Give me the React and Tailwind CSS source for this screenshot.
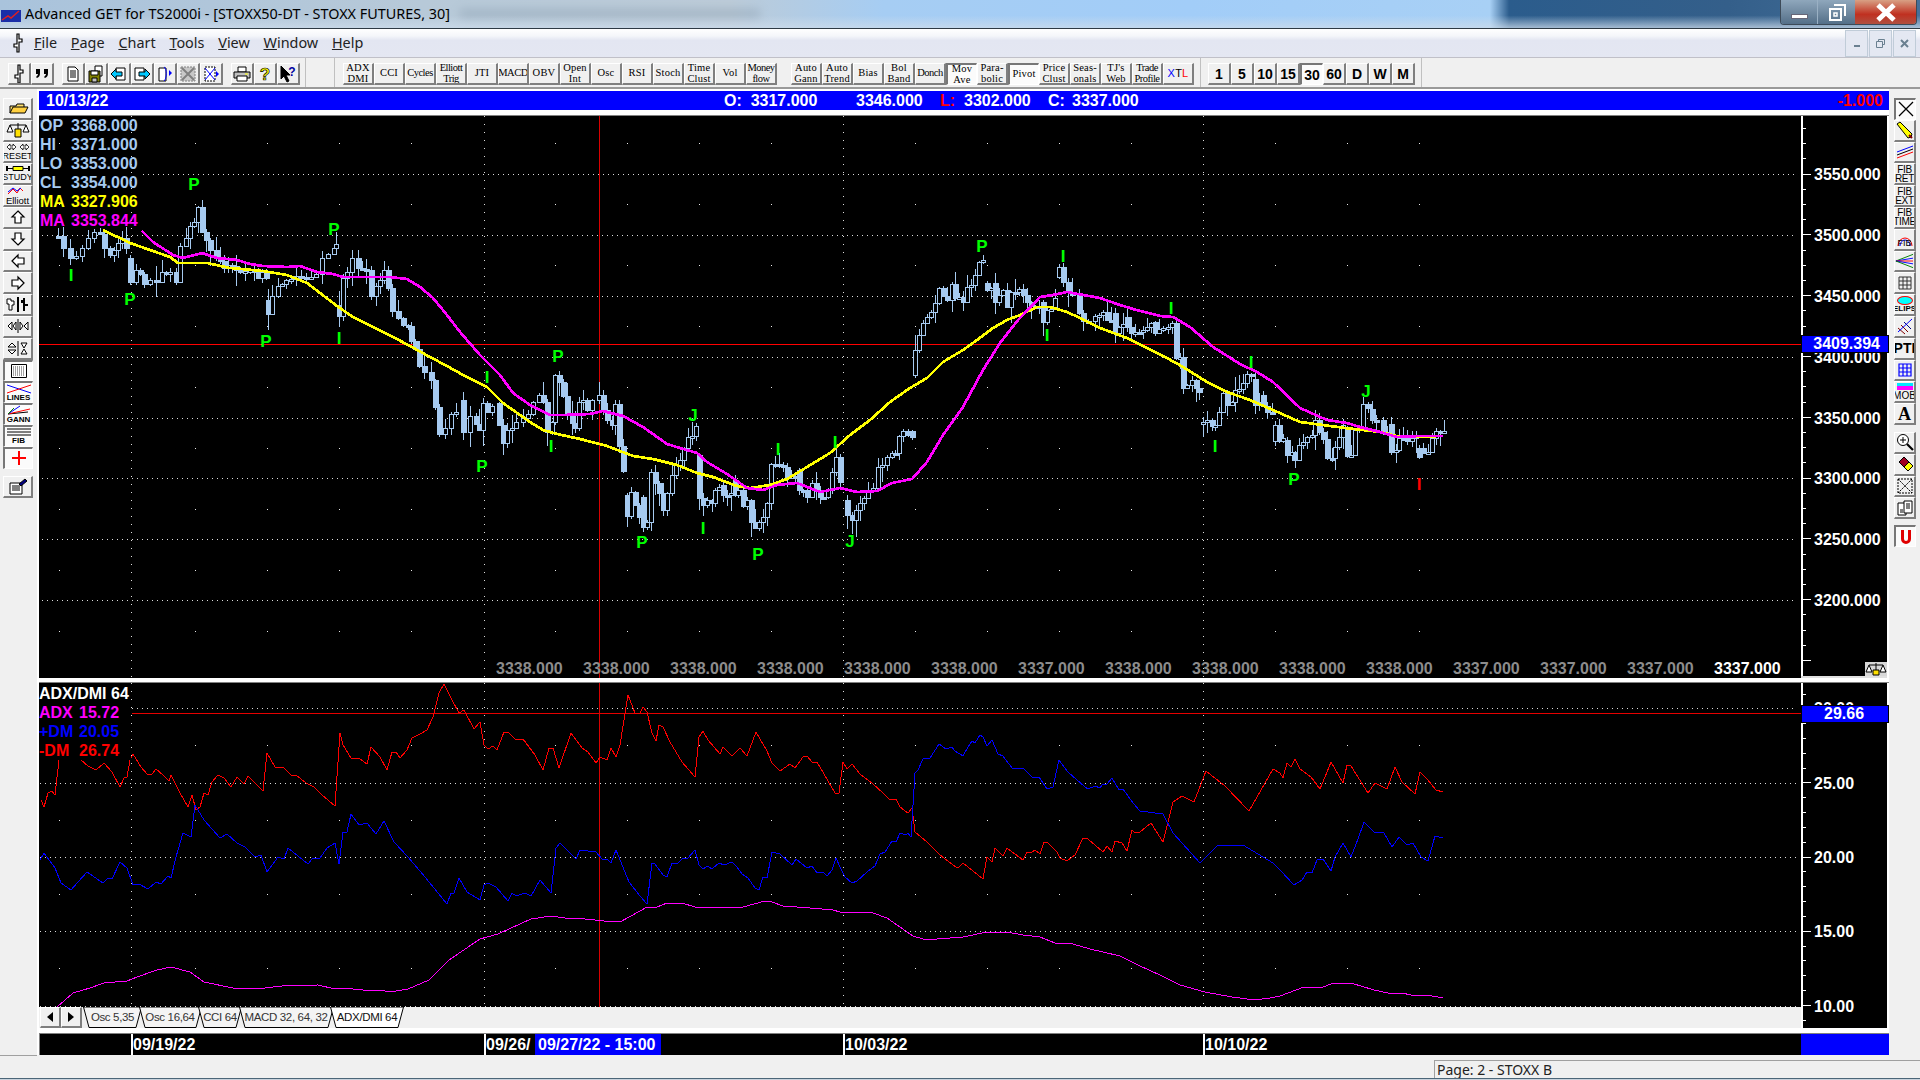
import React from "react";

// close prices as screen positions [x, y, optional open]
const closes = [
  [58,236],[63,248],[70,258],[76,256],[82,248],[88,238],[94,232],[100,234],[104,248],[110,255],[114,250],[118,243],[122,238],[126,248],[130,282,258],[136,270],[144,284],[150,280],[156,282],[162,272],[170,272],[176,282],[180,246],[186,238],[190,226],[194,222],[198,207],[202,232],[206,240],[210,250],[216,258],[224,268],[232,266],[240,272],[250,270],[258,278],[262,272],[266,278],[268,314,300],[272,296],[278,286],[286,280],[296,276],[306,278],[316,274],[322,258],[328,254],[334,248],[336,244],[339,316,305],[343,278],[347,272],[352,258],[358,268],[366,270],[371,296,270],[376,286],[380,280],[384,270],[388,288],[392,311],[398,318],[403,325],[408,326],[411,341],[415,349],[419,366],[424,372],[431,380],[435,407],[439,434],[445,428],[451,414],[456,412],[463,432,400],[470,416],[476,424],[479,430],[483,403],[487,412],[492,406],[499,425,403],[503,443],[507,430],[512,428],[516,422],[523,418],[528,414],
  [533,402],[539,395],[543,402],[547,432],[552,422],[555,375],[559,382],[563,396],[567,413],[572,423],[575,428],[579,402],[583,400],[587,410],[592,400],[599,395],[603,410],[607,420],[612,425],[615,404],[619,446,404],[623,471],[627,516,495],[631,492],[635,505],[643,527,497],[647,522],[651,472],[655,483],[659,493],[663,510],[667,493],[672,475],[676,465],[680,460],[684,448],[688,437],[692,436],[696,426],[699,498,455],[703,505],[707,500],[712,503],[715,490],[719,487],[723,495,485],[727,495],[735,495,480],[738,490],[743,506,490],[747,500],[751,522,500],[755,528],[759,522],[763,517],[767,503],[771,464],[775,464],[779,465],[783,467],[787,478],[795,477],[799,490,470],[803,490],[807,497],[812,483],[816,491],[820,497],[823,497],[828,490],[832,472],[836,457],[840,482],[847,515,500],[852,520],[856,510],[860,503],[864,498],[868,491],[873,488],[878,467],[882,465],[887,457],[892,453],[895,453],[899,436],[903,431],[912,437,431],
  [915,350,375],[919,335],[923,323],[927,317],[931,312],[935,303],[939,288],[943,296,288],[947,300],[952,284],[955,298,284],[959,297],[963,302],[967,287],[971,285],[975,275],[979,262],[983,260],[987,290,283],[991,288],[995,302,283],[999,295],[1003,290],[1007,307,290],[1011,292],[1015,292],[1019,289],[1023,295],[1027,302],[1035,308],[1039,306],[1043,322,302],[1047,310],[1051,309],[1055,298],[1059,267,277],[1063,282,267],[1068,292],[1072,295],[1079,313,294],[1083,321],[1088,321],[1095,316],[1099,315],[1103,312],[1107,320,312],[1111,320],[1115,333,313],[1119,327],[1127,327,317],[1131,333],[1135,332],[1143,330],[1147,327],[1151,323],[1155,333,322],[1159,329],[1163,328],[1168,327],[1172,323],[1176,358,323],[1180,357],[1183,388,357],[1187,385],[1192,380],[1196,388],[1199,392],[1203,422,424],[1207,420],[1212,426,420],[1215,425],[1219,412],[1223,393],[1227,405,393],[1232,402],[1235,390],[1239,389],[1243,383],[1247,374],[1251,374],[1255,405,379],[1259,402],[1263,406,395],[1267,412],[1272,413],[1275,425,441],[1279,441,425],[1283,438],[1287,455,440],[1292,452],[1295,460,452],[1299,445],[1303,442],[1307,437],[1312,435],[1315,420],[1319,432,420],[1323,439],[1327,458],[1332,458],[1335,447],[1339,437],[1343,425],[1347,456,430],[1351,455],[1355,430],[1359,428],[1363,404],[1368,408],[1372,420,409],[1376,420],[1383,432,420],[1387,432],[1391,452,424],[1396,450],[1399,438],[1403,438],[1407,441],[1412,438],[1416,435],[1419,457,448],[1423,453,448],[1428,452],[1432,438],[1436,431],[1440,431],[1444,431,432],
];

function buildCandles() {
  let seed = 7;
  const rnd = () => {
    seed = (seed * 16807) % 2147483647;
    return seed / 2147483647;
  };
  const list = [];
  let prev = closes[0][1];
  closes.forEach(([x, y, open], i) => {
    const last = closes[i - 1];
    if (last && x - last[0] >= 7) {
      const steps = Math.floor((x - last[0]) / 4);
      for (let s = 1; s < steps; s++) {
        const t = s / steps;
        const c = last[1] + (y - last[1]) * t + (rnd() - 0.5) * 6;
        list.push({ x: Math.round(last[0] + (x - last[0]) * t), o: prev, c });
        prev = c;
      }
    }
    list.push({ x, o: open ?? prev, c: y });
    prev = y;
  });
  return list.map((k) => {
    const top = Math.min(k.o, k.c);
    const bottom = Math.max(k.o, k.c);
    return {
      ...k,
      top,
      bottom: Math.max(bottom, top + 2),
      hi: top - 1 - rnd() * rnd() * 16,
      lo: bottom + 1 + rnd() * rnd() * 18,
      down: k.c >= k.o,
    };
  });
}
const candles = buildCandles();

const maYellow = "103,230 130,243 150,250 170,257 178,263 207,263 230,268 263,271 287,275 307,283 320,293 337,306 353,317 373,327 393,337 410,346 430,357 447,366 463,375 487,387 503,403 523,417 530,422 543,430 557,434 580,439 607,446 633,456 653,459 677,465 697,473 713,477 737,486 750,488 770,485 787,479 807,467 830,453 850,435 870,420 890,402 910,388 927,378 943,362 963,350 977,340 993,328 1007,320 1020,315 1037,307 1050,307 1067,312 1080,318 1100,328 1127,338 1147,348 1167,358 1183,367 1207,382 1227,392 1250,400 1273,410 1300,422 1315,424 1345,428 1380,432 1400,437 1443,436";
const maMagenta = "142,231 153,242 173,255 183,258 202,253 217,258 237,260 250,264 263,266 287,267 300,266 317,272 333,274 343,277 390,277 407,279 420,287 433,298 447,315 460,332 480,355 500,375 513,393 530,405 550,415 563,415 590,414 603,411 623,416 643,427 667,444 680,448 697,453 707,462 727,474 747,488 763,490 777,485 797,483 820,492 840,488 857,492 877,491 892,483 912,479 927,462 943,435 963,407 983,370 1000,343 1018,320 1023,315 1040,297 1053,295 1067,292 1100,298 1117,304 1133,309 1160,316 1173,317 1190,327 1213,347 1240,364 1257,372 1273,382 1300,408 1327,420 1347,423 1360,427 1380,432 1397,437 1420,436 1443,436";

const dmiRed = [
  "41,800 44,807 48,793 52,791 55,795 59,760",
  "81,760 88,766 96,770 104,763 112,772 120,787 124,778 127,777 130,760 133,754 141,767 147,774 152,774 156,769 163,775 169,781 171,775 180,793 188,807 192,795 196,810 200,807 204,793 208,795 212,782 218,775 224,778 231,787 237,777 244,784 248,776 255,783 263,791 267,753 275,767 284,768 292,776 296,775 306,783 314,787 322,795 335,806 340,733 343,745 351,758 359,758 367,764 371,747 380,757 387,770 392,752 396,752 400,758 407,750 412,738 420,734 427,730 433,717 439,693 444,684 451,698 459,713 464,710 474,729 480,722 484,745 488,749 493,746 497,750 504,732 508,732 516,740 523,739 535,755 543,770 549,748 553,748 559,768 571,733 582,748 588,752 596,763 600,757 607,760 611,748 616,757 620,745 628,695 635,713 640,713 643,707 647,712 652,733 656,741 659,725 663,727 670,742 682,762 695,777 699,737 703,731 708,740 720,754 723,747 732,756 740,748 747,756 756,732 767,751 772,763 780,771 790,764 795,768 803,757 807,756 812,762 817,762 835,793 839,793 843,762 847,769 852,764 860,774 873,784 883,793 890,800 896,799 900,807 908,813 912,808 915,832 927,842 940,855 956,867 959,867 963,863 983,879 987,857 992,862 995,848 1003,856 1007,848 1023,860 1027,852 1031,853 1035,850 1040,854 1044,842 1048,843 1057,852 1060,858 1067,861 1075,855 1083,838 1088,839 1103,852 1107,846 1112,852 1115,841 1122,843 1127,851 1132,830 1135,833 1140,832 1151,823 1163,842 1173,802 1182,796 1194,802 1206,771 1225,786 1249,811 1273,769 1280,773 1283,778 1287,763 1291,767 1295,759 1300,769 1311,777 1320,789 1325,777 1331,762 1343,783 1347,765 1351,766 1368,793 1375,783 1387,789 1395,767 1402,782 1415,794 1420,772 1427,779 1436,790 1443,792",
];
const dmiBlue = "40,860 44,853 55,868 61,883 71,890 78,882 87,872 103,883 108,878 112,879 120,862 127,868 133,885 139,884 148,889 156,882 161,884 168,876 171,878 176,857 183,833 191,837 195,805 204,820 220,838 227,834 237,843 245,847 255,857 261,855 267,872 278,857 284,859 288,848 308,864 312,859 320,858 327,848 335,843 339,864 343,832 347,832 351,814 359,825 367,823 376,834 384,821 394,842 408,857 425,877 447,904 451,893 454,893 459,878 467,892 480,900 484,885 488,883 496,887 508,901 512,893 516,896 525,893 531,896 540,880 551,893 556,848 560,843 576,859 580,850 596,852 602,859 608,860 611,863 616,850 629,882 640,896 647,904 652,863 655,864 663,875 667,877 672,863 677,864 683,858 688,858 695,850 699,865 703,869 708,866 712,869 719,863 724,865 732,862 737,867 742,874 748,878 755,888 759,890 763,877 767,878 772,852 780,854 792,865 796,859 807,868 812,866 817,873 823,872 827,876 832,870 836,858 840,867 845,877 852,883 857,881 867,872 875,866 880,854 885,852 892,841 896,842 900,833 906,835 908,833 911,837 915,773 918,770 923,759 930,758 939,744 946,749 952,747 955,751 963,756 968,747 972,741 975,743 980,735 983,737 987,746 992,740 998,754 1003,756 1012,768 1018,769 1023,768 1032,777 1039,777 1047,789 1053,787 1059,760 1068,772 1085,787 1088,789 1095,786 1100,788 1103,784 1107,784 1112,778 1119,790 1123,789 1133,803 1140,811 1163,814 1173,833 1200,863 1218,845 1243,845 1273,863 1280,870 1294,885 1302,880 1307,872 1312,873 1317,860 1323,859 1331,871 1335,857 1343,843 1351,857 1358,839 1364,822 1374,832 1384,833 1392,847 1399,837 1407,845 1413,843 1421,857 1428,861 1435,836 1443,838";
const adx = "40,1007 57,1007 73,993 90,988 104,983 127,981 137,977 157,970 171,967 190,972 204,982 233,988 245,989 265,988 282,986 318,985 335,989 343,988 363,990 380,990 390,992 408,989 429,980 449,960 480,939 498,934 531,919 551,916 565,918 576,918 604,921 620,922 640,911 647,907 657,907 667,903 682,903 695,907 702,907 743,907 765,901 772,902 783,906 810,908 833,910 840,912 873,913 887,918 900,927 913,936 923,939 937,939 963,937 987,932 1007,932 1023,935 1040,937 1055,943 1073,944 1090,949 1120,956 1140,966 1160,975 1180,985 1205,992 1232,997 1255,1000 1270,998 1280,996 1304,987 1323,987 1331,984 1351,983 1374,990 1388,993 1402,993 1411,995 1427,995 1443,998";

const marks = [
  ["I",71,275],["P",130,299],["P",194,184],["P",334,229],["P",266,341],["I",339,338],["P",482,466],["I",487,377],
  ["P",558,356],["I",551,446],["P",642,542],["J",693,415],["I",703,528],["P",758,554],["I",778,449],["I",835,442],["J",850,541],
  ["P",982,246],["I",1063,256],["I",1047,335],["I",1171,308],["I",1251,362],["I",1215,446],["J",1366,391],["P",1294,479],["I",1419,484,"#ff0000"],
];

const sparseCols = [59,195,267,339,411,555,627,699,771,915,987,1059,1131,1275,1347,1419];
const weekCols = [131,484,843,1203];
const priceRows = [174,235,296,357,418,478,539,600];
const priceLabels = ["3550.000","3500.000","3450.000","3400.000","3350.000","3300.000","3250.000","3200.000"];
const bottomPrices = ["3338.000","3338.000","3338.000","3338.000","3338.000","3338.000","3337.000","3338.000","3338.000","3338.000","3338.000","3337.000","3337.000","3337.000","3337.000"];
const dmiRows = [[708,"30.00"],[783,"25.00"],[857,"20.00"],[931,"15.00"],[1006,"10.00"]];

const BLUE = "#a6caf0";

function Dots({ rows, columns }) {
  return (
    <g fill="#e8e8e8">
      {rows.flatMap((y) => columns.map((x) => <rect key={`${x}-${y}`} x={x} y={y} width="1" height="1" />))}
    </g>
  );
}

function MainChart() {
  return (
    <svg viewBox="39 116 1848 562" className="block w-[1848px] h-[562px] font-['Liberation_Sans',sans-serif] font-bold text-[16px]" shapeRendering="crispEdges">
      <Dots rows={[143,204,265,326,387,448,509,570,631]} columns={sparseCols} />
      {priceRows.map((y, i) => (
        <line key={y} x1={i === 0 ? 143 : 42} x2="1796" y1={y + 0.5} y2={y + 0.5} stroke="#dcdcdc" strokeDasharray="1 4" />
      ))}
      {weekCols.map((x) => (
        <line key={x} x1={x + 0.5} x2={x + 0.5} y1="116" y2="678" stroke="#dcdcdc" strokeDasharray="1 7" />
      ))}
      <line x1="599.5" x2="599.5" y1="116" y2="678" stroke="#d80000" />
      <line x1="39" x2="1801" y1="344.5" y2="344.5" stroke="#ff0000" />
      {candles.map((k, i) => (
        <g key={i} stroke={BLUE}>
          <line x1={k.x + 0.5} x2={k.x + 0.5} y1={k.hi} y2={k.lo} />
          {k.down ? (
            <rect x={k.x - 2} y={k.top} width="5" height={k.bottom - k.top} fill={BLUE} />
          ) : (
            <rect x={k.x - 1.5} y={k.top} width="4" height={k.bottom - k.top} fill="#000" />
          )}
        </g>
      ))}
      <g fill="none" strokeWidth="2.7">
        <polyline points={maYellow} stroke="#ffff00" />
        <polyline points={maMagenta} stroke="#ff00ff" />
      </g>
      <g shapeRendering="auto">
        {marks.map(([t, x, y, c], i) => (
          <text key={i} x={x} y={y + 6} textAnchor="middle" fontSize="17" fill={c || "#00ff00"}>{t}</text>
        ))}
        {bottomPrices.map((p, i) => (
          <text key={i} x={496 + 87 * i} y="674" fill={i === 14 ? "#ffffff" : "#8c8c8c"}>{p}</text>
        ))}
        {priceLabels.map((p, i) => (
          <text key={p} x="1814" y={priceRows[i] + 6} fill="#ffffff">{p}</text>
        ))}
      </g>
      <rect x="1801" y="116" width="2" height="562" fill="#ffffff" />
      <rect x="1801" y="676" width="86" height="2" fill="#e0e0e0" />
      {Array.from({ length: 36 }, (_, i) => 128 + i * 15.2).map((y, i) => (
        <rect key={y} x="1803" y={Math.round(y)} width={(i % 4) === 3 ? 8 : 3} height="1" fill="#ffffff" />
      ))}
    </svg>
  );
}

function DmiChart() {
  return (
    <svg viewBox="39 683 1762 324" className="block w-[1762px] h-[324px]" shapeRendering="crispEdges">
      <Dots rows={[745,820,894,968]} columns={sparseCols} />
      {dmiRows.map(([y], i) => (
        <line key={y} x1={i === 0 ? 132 : 40} x2="1796" y1={y + 0.5} y2={y + 0.5} stroke="#dcdcdc" strokeDasharray="1 4" />
      ))}
      {weekCols.map((x) => (
        <line key={x} x1={x + 0.5} x2={x + 0.5} y1="683" y2="1007" stroke="#dcdcdc" strokeDasharray="1 7" />
      ))}
      <line x1="599.5" x2="599.5" y1="683" y2="1007" stroke="#d80000" />
      <line x1="132" x2="1801" y1="713.5" y2="713.5" stroke="#e60000" />
      <g fill="none" strokeWidth="1">
        {dmiRed.map((p) => <polyline key={p} points={p} stroke="#ff0000" />)}
        <polyline points={dmiBlue} stroke="#0000ff" />
        <polyline points={adx} stroke="#ff00ff" />
      </g>
    </svg>
  );
}

function DmiAxis() {
  return (
    <svg viewBox="1801 683 86 345" className="block w-[86px] h-[345px] font-['Liberation_Sans',sans-serif] font-bold text-[16px]" shapeRendering="crispEdges">
      <rect x="1801" y="683" width="2" height="345" fill="#ffffff" />
      {Array.from({ length: 23 }, (_, i) => 693.5 + i * 14.83).map((y, i) => (
        <rect key={y} x="1803" y={Math.round(y)} width={i % 5 === 1 ? 8 : 3} height="1" fill="#ffffff" />
      ))}
      {dmiRows.map(([y, t]) => (
        <text key={y} x="1814" y={y + 6} fill="#ffffff" shapeRendering="auto">{t}</text>
      ))}
    </svg>
  );
}

/* ---------- toolbar bits ---------- */

function Btn({ className = "", pressed, children }) {
  return (
    <div
      className={`flex items-center justify-center shrink-0 overflow-hidden leading-none text-black ${
        pressed
          ? "bg-[#fbfbfb] border-t-2 border-l-2 border-b border-r border-t-[#777777] border-l-[#777777] border-b-white border-r-white"
          : "bg-[#f0f0f0] border-t border-l border-b-2 border-r-2 border-t-white border-l-white border-b-[#7f7f7f] border-r-[#7f7f7f]"
      } ${className}`}
    >
      {children}
    </div>
  );
}

const Ico = ({ w = 18, h = 18, children }) => (
  <svg width={w} height={h} viewBox={`0 0 ${w} ${h}`} fill="none" stroke="#000" strokeWidth="1">{children}</svg>
);

const CandleGlyph = () => (
  <Ico w={12} h={20}>
    <path d="M5 1h2v5h3v3H7v10H5v-5H2v-3h3z" fill="#fff" strokeWidth="1.2" />
  </Ico>
);

const iconsTop = {
  quote: <Ico><path d="M3 4h4v4c0 3-1 4-3 5l-1-1c1-1 2-2 2-3H3zM11 4h4v4c0 3-1 4-3 5l-1-1c1-1 2-2 2-3h-2z" fill="#000" stroke="none" /></Ico>,
  doc: <Ico><path d="M4 2h7l3 3v11H4z" fill="#fff" /><path d="M6 6h6M6 8h6M6 10h6M6 12h6" /></Ico>,
  save: <Ico><path d="M8 1h7v10H8z" fill="#fff" /><path d="M2 6h11v11H2z" fill="#808000" /><path d="M4 6h7v4H4z" fill="#fff" /><path d="M5 13h5v4H5z" fill="#c0c0c0" /></Ico>,
  left: <Ico><path d="M6 3h9v12H6z" fill="#fff" /><path d="M1 9l5-5v3h6v4H6v3z" fill="#00c8ff" /></Ico>,
  right: <Ico><path d="M2 3h9v12H2z" fill="#fff" /><path d="M17 9l-5-5v3H6v4h6v3z" fill="#00c8ff" /></Ico>,
  pages: <Ico><path d="M3 3h7v13H3z" fill="#fff" /><path d="M8 2c3 1 3 12 0 14" stroke="#0000ff" /><path d="M13 5l3 3-3 3z" fill="#0000ff" stroke="none" /></Ico>,
  cross: <Ico><path d="M2 2h14v14H2z" fill="#c8c8c8" stroke="#808080" strokeDasharray="2 1" /><path d="M3 3l12 12M15 3L3 15" stroke="#808080" strokeWidth="2" /></Ico>,
  tile: <Ico><path d="M3 2h10v14H3z" fill="#fff" strokeDasharray="2 1" /><path d="M3 3l10 12M13 3L3 15" stroke="#0000ff" /><path d="M14 6l3 3-3 3z" fill="#0000ff" stroke="none" /></Ico>,
  print: <Ico><path d="M5 2h8v5H5z" fill="#fff" /><path d="M1 7h16v6H1z" fill="#c0c0c0" /><path d="M4 11h10v5H4z" fill="#fff" /><path d="M12 9h3" stroke="#ffff00" /></Ico>,
  help: <Ico><text x="9" y="15" textAnchor="middle" fontSize="17" fontWeight="700" fill="#ffff00" stroke="#000" strokeWidth="0.7" fontFamily="Liberation Sans">?</text></Ico>,
  what: <Ico><path d="M2 1v13l3-3 3 6 2-1-3-6h4z" fill="#000" /><text x="13" y="11" textAnchor="middle" fontSize="12" fontWeight="700" fill="#0000a0" stroke="none" fontFamily="Liberation Sans">?</text></Ico>,
};

const row1 = ["ADX|DMI","CCI","Cycles","Elliott|Trig","JTI","MACD","OBV","Open|Int","Osc","RSI","Stoch","Time|Clust","Vol","Money|flow"];
const row2 = ["Auto|Gann","Auto|Trend","Bias","Bol|Band","Donch","Mov|Ave","Para-|bolic","Pivot","Price|Clust","Seas-|onals","TJ's|Web","Trade|Profile","XTL"];
const narrowLabels = ["Cycles","MACD","Donch","Elliott|Trig","Trade|Profile","Money|flow"];

function TextBtn({ label }) {
  const pressed = label === "Mov|Ave" || label === "Pivot";
  const parts = label.split("|");
  const tracking = narrowLabels.includes(label) ? "tracking-[-0.5px]" : "tracking-[0.2px]";
  return (
    <Btn pressed={pressed} className={`w-[31px] h-[22px] flex-col font-['Liberation_Serif',serif] text-[10.5px] leading-[10px] ${tracking}`}>
      {label === "XTL" ? (
        <span className="font-['Liberation_Sans',sans-serif] text-[11px]">
          <span className="text-[#0000ff]">X</span>T<span className="text-[#ff0000]">L</span>
        </span>
      ) : (
        parts.map((p) => <span key={p} className="whitespace-nowrap">{p}</span>)
      )}
    </Btn>
  );
}

const Caption = ({ children }) => (
  <span className="font-['Liberation_Sans',sans-serif] text-[9px] leading-[9px]">{children}</span>
);

const Arrow = ({ d }) => (
  <Ico w={16} h={16}><path d={d} fill="#fff" strokeWidth="1.2" /></Ico>
);

const leftTools = [
  { i: <Ico w={22} h={16}><path d="M3 13V6h6l1-2h7v3" fill="#ffe070" /><path d="M3 13l3-6h15l-3 6z" fill="#ffd040" /></Ico> },
  { i: <Ico w={26} h={18}><path d="M13 2v14M5 4h16" stroke="#000" /><path d="M2 11l3-7 3 7zM18 11l3-7 3 7z" fill="#fff" /><path d="M10 16h6V8h-6z" fill="#ffe000" /></Ico> },
  { i: <div className="flex flex-col items-center gap-[1px]"><Ico w={24} h={8}><path d="M1 4l3-3v2h3V1l3 3-3 3V5H4v2zM14 4l3-3v2h3V1l3 3-3 3V5h-3v2z" fill="#fff" strokeWidth="0.8" /></Ico><Caption>RESET</Caption></div> },
  { i: <div className="flex flex-col items-center gap-[1px]"><Ico w={24} h={7}><path d="M1 3.5h22" strokeWidth="1" /><path d="M1 1v5M23 1v5" strokeWidth="2" /><path d="M7 1.5h10v4H7z" fill="#ffff00" /></Ico><Caption>STUDY</Caption></div> },
  { i: <div className="flex flex-col items-center gap-[1px]"><Ico w={22} h={9}><path d="M2 8l5-5 4 4 3-5 3 3" stroke="#ff0000" /><path d="M2 6l5-4 4 3 4-3" stroke="#0000ff" /></Ico><span className="font-['Liberation_Sans',sans-serif] text-[9.5px] leading-[9px]">Elliott</span></div> },
  { i: <Arrow d="M8 2l6 6h-3v6H5V8H2z" /> },
  { i: <Arrow d="M8 14l6-6h-3V2H5v6H2z" /> },
  { i: <Arrow d="M2 8l6-6v3h6v6H8v3z" /> },
  { i: <Arrow d="M14 8L8 2v3H2v6h6v3z" /> },
  { i: <Ico w={24} h={17}><path d="M12 1v15" strokeWidth="2" /><path d="M3 3h2v2h3v4H6v5H3V8H1V3z" fill="#fff" /><path d="M17 2h2v6h3v2h-3v5h-2V7h-2V4h2z" fill="#000" stroke="none" /></Ico> },
  { i: <Ico w={24} h={16}><path d="M12 1v14" /><path d="M2 8l4-4v8zM10 4v8L7 8zM14 4l3 4-3 4zM22 4v8l-4-4z" fill="#fff" /></Ico> },
  { i: <Ico w={24} h={17}><path d="M12 1v15" /><path d="M2 7l4-4 4 4zM2 10l4 4 4-4zM15 3h6l-3 5zM15 14h6l-3-5z" fill="#fff" /></Ico> },
  { pressed: true, i: <Ico w={16} h={14}><path d="M.5.5h15v13H.5z" fill="#fff" /><path d="M2 3h12M2 5h12M2 7h12M2 9h12M2 11h12" stroke="#444" strokeDasharray="1 1" /></Ico> },
  { pressed: true, i: <div className="flex flex-col items-center"><Ico w={26} h={11}><path d="M1 2l24 8" stroke="#0000ff" /><path d="M1 10L25 2" stroke="#ff0000" /></Ico><span className="font-['Liberation_Sans',sans-serif] font-bold text-[8px] leading-[8px]">LINES</span></div> },
  { pressed: true, i: <div className="flex flex-col items-center"><Ico w={26} h={11}><path d="M2 9l20-2" stroke="#000" /><path d="M2 9l22-5" stroke="#ff0000" /><path d="M2 9l12-8" stroke="#0000ff" /><path d="M2 9l6-6" stroke="#008000" /></Ico><span className="font-['Liberation_Sans',sans-serif] font-bold text-[8px] leading-[8px]">GANN</span></div> },
  { pressed: true, i: <div className="flex flex-col items-center"><Ico w={26} h={10}><path d="M1 2h24M1 5h24M1 8h24" /></Ico><span className="font-['Liberation_Sans',sans-serif] font-bold text-[8px] leading-[8px]">FIB</span></div> },
  { pressed: true, i: <Ico w={16} h={16}><path d="M8 1v14M1 8h14" stroke="#ff0000" strokeWidth="2" /></Ico> },
];

const fibText = (a, b) => (
  <div className="flex flex-col items-center font-['Liberation_Sans',sans-serif] text-[10px] leading-[9px] tracking-[-0.3px]">
    <span>{a}</span><span>{b}</span>
  </div>
);

const rightTools = [
  { pressed: true, i: <Ico w={16} h={16}><path d="M1 1l14 14M15 1L1 15" strokeWidth="1.3" /></Ico> },
  { i: <Ico w={18} h={18}><path d="M1 3l3-2 12 12-1 3-3 1z" fill="#ffff00" /><path d="M13 14l3 3" stroke="#800000" strokeWidth="2" /></Ico> },
  { i: <Ico w={18} h={16}><path d="M1 8l16-6" stroke="#0000ff" /><path d="M1 11l16-6" stroke="#000" /><path d="M1 14l16-6" stroke="#ff0000" /></Ico> },
  { i: fibText("FIB", "RET") },
  { i: fibText("FIB", "EXT") },
  { i: fibText("FIB", "TIME") },
  { i: <div className="relative w-[18px] h-[18px] flex items-end justify-center"><Ico w={18} h={18}><path d="M2 16a7 8 0 0 1 14 0" stroke="#ff0000" /><path d="M4 16a5 6 0 0 1 10 0" stroke="#0000ff" /></Ico><span className="absolute bottom-0 font-['Liberation_Sans',sans-serif] text-[9px] leading-[9px]">FIB</span></div> },
  { i: <Ico w={20} h={16}><path d="M1 8l18-7" stroke="#008000" /><path d="M1 8l18-3" stroke="#0000ff" /><path d="M1 8h18" stroke="#ff0000" /><path d="M1 8l18 3" stroke="#0000ff" /><path d="M1 8l18 7" stroke="#008000" /></Ico> },
  { i: <Ico w={16} h={16}><path d="M2 2h12v12H2zM6 2v12M10 2v12M2 6h12M2 10h12" stroke="#333" /></Ico> },
  { i: <div className="flex flex-col items-center"><div className="w-[16px] h-[9px] rounded-[50%] bg-[#00ffff] border border-[#ff0000]" /><span className="font-['Liberation_Sans',sans-serif] font-bold text-[8px] leading-[8px]">ELIPS</span></div> },
  { i: <Ico w={18} h={18}><path d="M2 11l7 6M5 8l7 7" stroke="#800000" /><path d="M8 5l7 7" stroke="#000080" /><path d="M2 15L16 2" stroke="#0000ff" /></Ico> },
  { i: <span className="font-['Liberation_Sans',sans-serif] font-bold text-[14px]">PTI</span> },
  { i: <Ico w={16} h={16}><path d="M2 2h12v12H2zM6 2v12M10 2v12M2 6h12M2 10h12" stroke="#0000ff" strokeWidth="1.2" /></Ico> },
  { i: <div className="flex flex-col items-center"><div className="w-[16px] h-[3px] bg-[#00e8ff]" /><div className="w-[16px] h-[4px] bg-[#ff00ff]" /><span className="font-['Liberation_Sans',sans-serif] text-[10px] leading-[11px]">MOB</span></div> },
  { i: <span className="font-['Liberation_Serif',serif] font-bold text-[18px]">A</span> },
];
const rightTools2 = [
  { i: <Ico w={18} h={18}><circle cx="7" cy="7" r="5.5" fill="#fff" /><path d="M7 4v6M4 7h6" /><path d="M11 11l6 6" strokeWidth="2.2" /></Ico> },
  { i: <Ico w={18} h={18}><path d="M3 7l5-5 5 5-5 5z" fill="#a00020" /><path d="M8 12l5-5 4 4-5 5z" fill="#ffff00" /></Ico> },
  { i: <Ico w={16} h={16}><path d="M1 1h14v14H1z" strokeDasharray="2 1" /><path d="M1 1l14 14M15 1L1 15" strokeDasharray="2 1" /></Ico> },
  { i: <Ico w={18} h={16}><path d="M2 3h8v12H2z" fill="#fff" /><path d="M8 1h8v12H8z" fill="#fff" /><path d="M10 4h4M10 6h4M10 8h4M4 10h3M4 12h3" /></Ico> },
];

function LeftToolbar() {
  return (
    <div className="w-[37px] shrink-0 flex flex-col pt-[9px] pl-[3px] border-b border-b-[#a0a0a0]">
      {leftTools.map((t, i) => (
        <Btn key={i} pressed={t.pressed} className="w-[30px] h-[21.8px]">{t.i}</Btn>
      ))}
      <Btn className="w-[30px] h-[22px] mt-[7px]">
        <Ico w={22} h={18}><path d="M3 6h12v11H3z" fill="#fff" /><path d="M5 9h8M5 11h8M5 13h8" /><path d="M12 7l6-5 2 2-6 5z" fill="#000080" /></Ico>
      </Btn>
    </div>
  );
}

function RightToolbar() {
  return (
    <div className="w-[31px] shrink-0 flex flex-col pt-[9px] pl-[5px]">
      {rightTools.map((t, i) => (
        <Btn key={i} pressed={t.pressed} className="w-[22px] h-[21.8px]">{t.i}</Btn>
      ))}
      <div className="h-[7px]" />
      {rightTools2.map((t, i) => (
        <Btn key={i} className="w-[22px] h-[21.8px]">{t.i}</Btn>
      ))}
      <Btn pressed className="w-[22px] h-[22px] mt-[6px]">
        <Ico w={16} h={18}><path d="M3 2v9a5 5 0 0 0 10 0V2h-3v9a2 2 0 0 1-4 0V2z" fill="#e00000" stroke="none" /></Ico>
      </Btn>
    </div>
  );
}

function TitleBar() {
  return (
    <div className="h-[29px] shrink-0 relative flex items-center border-b border-b-[#2e3a44] [background:linear-gradient(180deg,rgba(255,255,255,0)_55%,rgba(205,220,235,.75)_100%),linear-gradient(90deg,#a9c3dc_0%,#b7c9d8_22%,#bccbd8_38%,#a6cdf3_46%,#a2cdf8_62%,#a8d0f5_77.6%,#2b5c8c_78.6%,#345f8a_90%,#44709a_100%)]">
      <div className="absolute left-[460px] top-[9px] w-[300px] h-[9px] bg-[#7a90a4] opacity-35 blur-[5px]" />
      <svg width="20" height="14" viewBox="0 0 20 14" className="relative ml-[1px] mt-[1px]">
        <path d="M0 2h20v12H0z" fill="#1a2ea8" />
        <path d="M1 12l6-4 3 2 8-7" stroke="#e02020" strokeWidth="1.5" fill="none" />
      </svg>
      <span className="relative ml-[4px] font-['Noto_Sans',sans-serif] text-[14.4px] text-black whitespace-nowrap">
        Advanced GET for TS2000i - [STOXX50-DT - STOXX FUTURES, 30]
      </span>
      <div className="absolute right-[3px] top-0 h-[25px] w-[137px] flex rounded-b-[4px] overflow-hidden border border-t-0 border-[#3c4a58]">
        <div className="w-[37px] flex items-end justify-center pb-[5px] bg-[linear-gradient(180deg,#8fa7bc,#546f88)] border-r border-r-[#9ab0c4]">
          <div className="w-[17px] h-[5px] bg-white border border-[#667]" />
        </div>
        <div className="w-[37px] flex items-center justify-center bg-[linear-gradient(180deg,#8fa7bc,#546f88)]">
          <svg width="20" height="18" viewBox="0 0 20 18" fill="none" stroke="#fff" strokeWidth="2">
            <path d="M7 2h11v11" /><path d="M3 6h11v11H3z" /><path d="M7 10h3v3H7z" strokeWidth="1.5" />
          </svg>
        </div>
        <div className="flex-1 flex items-center justify-center bg-[linear-gradient(180deg,#d8a084,#c03020_60%,#b05040)]">
          <svg width="22" height="19" viewBox="0 0 22 19" stroke="#fff" strokeWidth="5"><path d="M3 2l16 15M19 2L3 17" /></svg>
        </div>
      </div>
    </div>
  );
}

const menus = [["F","ile"],["P","age"],["C","hart"],["T","ools"],["V","iew"],["W","indow"],["H","elp"]];
const mdiBtn = "w-[23px] h-[27px] flex items-center justify-center bg-[#e4e8f2] border border-[#c0ccd8]";

function MenuBar() {
  return (
    <div className="h-[29px] shrink-0 flex items-center pl-[12px] pr-[4px] border-b border-b-[#c0c0c8] bg-[linear-gradient(180deg,#ffffff_0%,#f4f6fa_25%,#e3e6f2_40%,#e4e7f2_100%)]">
      <CandleGlyph />
      <div className="flex ml-[10px] font-['Noto_Sans',sans-serif] text-[14.4px] text-[#222] gap-[13.8px]">
        {menus.map(([a, b]) => (
          <span key={a}><span className="underline">{a}</span>{b}</span>
        ))}
      </div>
      <div className="ml-auto flex gap-[1px]">
        <div className={mdiBtn}><div className="w-[6px] h-[2px] mt-[6px] bg-[#6a8090]" /></div>
        <div className={mdiBtn}><svg width="9" height="9" viewBox="0 0 9 9" fill="none" stroke="#6a8090"><path d="M2.5 2.5V.5h6v5h-2M.5 2.5h6v6h-6z" /></svg></div>
        <div className={mdiBtn}><svg width="9" height="9" viewBox="0 0 9 9" stroke="#6a8090" strokeWidth="2"><path d="M1 1l7 7M8 1L1 8" /></svg></div>
      </div>
    </div>
  );
}

function IconBtn({ children }) {
  return <Btn className="w-[23px] h-[22px]">{children}</Btn>;
}

const Sep = ({ className }) => <div className={`-mt-[5px] h-[29px] border-r border-r-[#c0c0c0] ${className}`} />;

function ToolBar() {
  return (
    <div className="h-[31px] shrink-0 flex items-start pt-[5px] pl-[8px] bg-[#f0f0f0] border-b-2 border-b-[#9a9a9a]">
      <IconBtn><CandleGlyph /></IconBtn>
      <IconBtn>{iconsTop.quote}</IconBtn>
      <div className="w-[8px]" />
      {["doc","save","left","right","pages","cross","tile"].map((k) => <IconBtn key={k}>{iconsTop[k]}</IconBtn>)}
      <div className="w-[8px]" />
      {["print","help","what"].map((k) => <IconBtn key={k}>{iconsTop[k]}</IconBtn>)}
      <Sep className="w-[6px]" />
      <Sep className="w-[29px]" />
      <div className="w-[8px]" />
      <div className="flex">{row1.map((l) => <TextBtn key={l} label={l} />)}</div>
      <div className="w-[14px]" />
      <div className="flex">{row2.map((l) => <TextBtn key={l} label={l} />)}</div>
      <Sep className="w-[7px]" />
      <div className="w-[7px]" />
      <div className="flex font-['Liberation_Sans',sans-serif] font-bold text-[14px]">
        {["1","5","10","15","30","60","D","W","M"].map((t) => (
          <Btn key={t} pressed={t === "30"} className="w-[23px] h-[22px]">{t}</Btn>
        ))}
      </div>
      <Sep className="w-[7px]" />
    </div>
  );
}

function InfoBar() {
  return (
    <div className="h-[19px] ml-[2px] flex items-center bg-[#0000ff] text-white font-['Liberation_Sans',sans-serif] font-bold text-[16px] leading-none">
      <span className="w-[685px] pl-[7px]">10/13/22</span>
      <span className="w-[132px]">O:&nbsp; 3317.000</span>
      <span className="w-[84px]">3346.000</span>
      <span className="w-[24px] text-[#ff0000]">L:</span>
      <span className="w-[84px]">3302.000</span>
      <span className="w-[24px]">C:</span>
      <span>3337.000</span>
      <span className="ml-auto pr-[6px] text-[#ff0000]">-1.000</span>
    </div>
  );
}

const tabs = [
  { t: "Osc 5,35", w: 59, cls: "w-[59px]" },
  { t: "Osc 16,64", w: 63, cls: "w-[63px]" },
  { t: "CCI 64", w: 44, cls: "w-[44px]" },
  { t: "MACD 32, 64, 32", w: 95, cls: "w-[95px]" },
  { t: "ADX/DMI 64", w: 74, cls: "w-[74px]", on: true },
];

function TabStrip() {
  return (
    <div className="h-[21px] flex bg-[#f0f0f0]">
      <Btn className="w-[21px] h-[21px] ml-[1px]"><div className="w-0 h-0 border-y-[5px] border-y-transparent border-r-[6px] border-r-black" /></Btn>
      <Btn className="w-[21px] h-[21px]"><div className="w-0 h-0 border-y-[5px] border-y-transparent border-l-[6px] border-l-black" /></Btn>
      <div className="flex ml-[1px]">
        {tabs.map((tab, i) => (
          <div key={tab.t} className={`relative h-[21px] flex items-center justify-center -mr-[3.5px] ${tab.cls}`}>
            <svg className="absolute inset-0" width={tab.w} height="21">
              <polygon points={`0.5,0 ${tab.w - 0.5},0 ${tab.w - 6},20.5 6,20.5`} fill={tab.on ? "#ffffff" : "#f4f4f4"} stroke="#000" />
            </svg>
            <span className={`relative font-['Liberation_Sans',sans-serif] text-[11.5px] tracking-[-0.35px] whitespace-nowrap ${i === 4 ? "text-[#111]" : "text-[#333]"}`}>{tab.t}</span>
          </div>
        ))}
      </div>
    </div>
  );
}

function DateBar() {
  return (
    <div className="h-[22px] mt-[5px] ml-[2px] flex relative border-t border-t-[#808080] border-l border-l-[#808080] text-white bg-black font-['Liberation_Sans',sans-serif] font-bold text-[16px] leading-[21px]">
      <div className="w-[91px]" />
      <div className="w-[353px] border-l-2 border-l-white">09/19/22</div>
      <div className="w-[359px] border-l-2 border-l-white">09/26/</div>
      <div className="w-[360px] border-l-2 border-l-white">10/03/22</div>
      <div className="w-[598px] border-l-2 border-l-white">10/10/22</div>
      <div className="flex-1 bg-[#0000ff]" />
      <div className="absolute left-[495px] top-0 bottom-0 w-[126px] pl-[3px] bg-[#0000ff] whitespace-nowrap">09/27/22 - 15:00</div>
    </div>
  );
}

const legendLine = "flex h-[19px] items-center";

export default function App() {
  return (
    <div className="w-[1920px] h-[1080px] overflow-hidden flex flex-col bg-[#f0f0f0]">
      <TitleBar />
      <MenuBar />
      <ToolBar />
      <div className="h-[967px] shrink-0 flex">
        <LeftToolbar />
        <div className="w-[1852px] shrink-0 flex flex-col pt-[2px] bg-white">
          <InfoBar />
          <div className="h-[6px] ml-[2px] border-b border-b-[#808080]" />
          {/* price pane */}
          <div className="relative ml-[2px] w-[1848px] h-[562px] bg-black">
            <MainChart />
            <div className="absolute left-[1px] top-0 font-['Liberation_Sans',sans-serif] font-bold text-[16px] leading-none">
              {[
                ["OP", "3368.000", "text-[#a6caf0]"],
                ["HI", "3371.000", "text-[#a6caf0]"],
                ["LO", "3353.000", "text-[#a6caf0]"],
                ["CL", "3354.000", "text-[#a6caf0]"],
                ["MA", "3327.906", "text-[#ffff00]"],
                ["MA", "3353.844", "text-[#ff00ff]"],
              ].map(([a, b, c], i) => (
                <div key={i} className={`${legendLine} ${c}`}>
                  <span className="w-[31px]">{a}</span>
                  <span>{b}</span>
                </div>
              ))}
            </div>
            <div className="absolute left-[1762px] top-[219px] w-[88px] h-[18px] pr-[8px] flex items-center justify-end bg-[#0000ff] text-white font-['Liberation_Sans',sans-serif] font-bold text-[16px] leading-none border border-black">
              3409.394
            </div>
            <div className="absolute right-0 bottom-[2px] w-[22px] h-[14px] flex items-center justify-center bg-[#d8d8d8]">
              <Ico w={22} h={14}><path d="M11 1v12M4 3h14" /><path d="M1 10l3-7 3 7zM15 10l3-7 3 7z" fill="#fff" /><path d="M8 13h6V8H8z" fill="#ffe000" /></Ico>
            </div>
          </div>
          <div className="h-[5px] ml-[2px] border-b border-b-[#808080]" />
          {/* indicator pane */}
          <div className="relative flex ml-[2px] w-[1848px] h-[345px]">
            <div className="w-[1762px] flex flex-col">
              <div className="bg-black h-[324px]"><DmiChart /></div>
              <TabStrip />
            </div>
            <div className="w-[86px] bg-black"><DmiAxis /></div>
            <div className="absolute left-0 top-[1px] font-['Liberation_Sans',sans-serif] font-bold text-[16px] leading-none">
              {[
                ["ADX/DMI 64", "", "text-white"],
                ["ADX", "15.72", "text-[#ff00ff]"],
                ["+DM", "20.05", "text-[#0000ff]"],
                ["-DM", "26.74", "text-[#ff0000]"],
              ].map(([a, b, c]) => (
                <div key={a} className={`${legendLine} ${c} bg-black w-[92px]`}>
                  <span className={b ? "w-[40px]" : "whitespace-nowrap"}>{a}</span>
                  <span>{b}</span>
                </div>
              ))}
            </div>
            <div className="absolute left-[1762px] top-[22px] w-[88px] h-[18px] pl-[22px] flex items-center bg-[#0000ff] text-white font-['Liberation_Sans',sans-serif] font-bold text-[16px] leading-none border border-black">
              29.66
            </div>
          </div>
          <DateBar />
          <div className="flex-1 bg-[#f0f0f0]" />
        </div>
        <RightToolbar />
      </div>
      <div className="h-[22px] shrink-0 bg-[#f0f0f0] pt-[4px] pl-[1434px] overflow-hidden">
        <div className="h-[18px] border-t border-l border-[#a0a0a0] pl-[2px] font-['Noto_Sans',sans-serif] text-[14px] leading-[18px] text-[#222]">
          Page: 2 - STOXX B
        </div>
      </div>
      <div className="flex-1 flex flex-col">
        <div className="h-[1px] bg-[#4c6678]" />
        <div className="flex-1 bg-[#c8d2dc]" />
      </div>
    </div>
  );
}
